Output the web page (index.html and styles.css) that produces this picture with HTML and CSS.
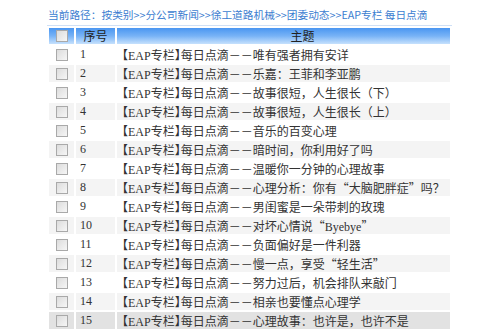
FILE: index.html
```html
<!DOCTYPE html>
<html lang="zh-CN">
<head>
    <meta charset="UTF-8">
    <title>EAP专栏 每日点滴</title>
    <link rel="stylesheet" href="styles.css">
</head>
<body>
    <div class="path">当前路径：<a>按类别</a>&gt;&gt;<a>分公司新闻</a>&gt;&gt;<a>徐工道路机械</a>&gt;&gt;<a>团委动态</a>&gt;&gt;<a>EAP专栏 每日点滴</a></div>

    <table class="list">
        <tr class="head">
            <th class="chk"><span class="box"></span></th>
            <th class="num">序号</th>
            <th class="title">主题</th>
        </tr>
        <tr><td class="chk"><span class="box"></span></td><td class="num">1</td><td class="title"><span class="tag">【<span class="en">EAP</span>专栏】</span>每日点滴－－唯有强者拥有安详</td></tr>
        <tr class="alt"><td class="chk"><span class="box"></span></td><td class="num">2</td><td class="title"><span class="tag">【<span class="en">EAP</span>专栏】</span>每日点滴－－乐嘉：王菲和李亚鹏</td></tr>
        <tr><td class="chk"><span class="box"></span></td><td class="num">3</td><td class="title"><span class="tag">【<span class="en">EAP</span>专栏】</span>每日点滴－－故事很短，人生很长（下）</td></tr>
        <tr class="alt"><td class="chk"><span class="box"></span></td><td class="num">4</td><td class="title"><span class="tag">【<span class="en">EAP</span>专栏】</span>每日点滴－－故事很短，人生很长（上）</td></tr>
        <tr><td class="chk"><span class="box"></span></td><td class="num">5</td><td class="title"><span class="tag">【<span class="en">EAP</span>专栏】</span>每日点滴－－音乐的百变心理</td></tr>
        <tr class="alt"><td class="chk"><span class="box"></span></td><td class="num">6</td><td class="title"><span class="tag">【<span class="en">EAP</span>专栏】</span>每日点滴－－暗时间，你利用好了吗</td></tr>
        <tr><td class="chk"><span class="box"></span></td><td class="num">7</td><td class="title"><span class="tag">【<span class="en">EAP</span>专栏】</span>每日点滴－－温暖你一分钟的心理故事</td></tr>
        <tr class="alt"><td class="chk"><span class="box"></span></td><td class="num">8</td><td class="title"><span class="tag">【<span class="en">EAP</span>专栏】</span>每日点滴－－心理分析：你有“大脑肥胖症”吗？</td></tr>
        <tr><td class="chk"><span class="box"></span></td><td class="num">9</td><td class="title"><span class="tag">【<span class="en">EAP</span>专栏】</span>每日点滴－－男闺蜜是一朵带刺的玫瑰</td></tr>
        <tr class="alt"><td class="chk"><span class="box"></span></td><td class="num">10</td><td class="title"><span class="tag">【<span class="en">EAP</span>专栏】</span>每日点滴－－对坏心情说“<span class="en">Byebye</span>”</td></tr>
        <tr><td class="chk"><span class="box"></span></td><td class="num">11</td><td class="title"><span class="tag">【<span class="en">EAP</span>专栏】</span>每日点滴－－负面偏好是一件利器</td></tr>
        <tr class="alt"><td class="chk"><span class="box"></span></td><td class="num">12</td><td class="title"><span class="tag">【<span class="en">EAP</span>专栏】</span>每日点滴－－慢一点，享受“轻生活”</td></tr>
        <tr><td class="chk"><span class="box"></span></td><td class="num">13</td><td class="title"><span class="tag">【<span class="en">EAP</span>专栏】</span>每日点滴－－努力过后，机会排队来敲门</td></tr>
        <tr class="alt"><td class="chk"><span class="box"></span></td><td class="num">14</td><td class="title"><span class="tag">【<span class="en">EAP</span>专栏】</span>每日点滴－－相亲也要懂点心理学</td></tr>
        <tr class="over"><td class="chk"><span class="box"></span></td><td class="num">15</td><td class="title"><span class="tag">【<span class="en">EAP</span>专栏】</span>每日点滴－－心理故事：也许是，也许不是</td></tr>
    </table>
</body>
</html>
```

FILE: styles.css
```css
body {
    margin: 0;
    background: #fff;
    font-family: "Noto Sans CJK SC", sans-serif;
    color: #333;
}

.path {
    height: 17px;
    padding: 8px 0 0 48px;
    font-size: 10.7px;
    line-height: 14px;
    color: #3b7dd0;
}
.path a {
    color: #3b7dd0;
}

.list {
    margin-left: 47px;
    width: 405px;
    border-collapse: separate;
    border-spacing: 2px;
    border-top: 1px solid #cfe0f6;
    font-size: 12px;
}

.list td, .list th {
    padding: 0;
    height: 17px;
    line-height: 17px;
    white-space: nowrap;
    overflow: hidden;
}

.list th {
    height: 16px;
    line-height: 16px;
    font-weight: normal;
    color: #222;
    background: linear-gradient(to bottom, #4a96f1 0%, #78b3f6 50%, #c6e1fd 100%);
}

.chk {
    width: 25px;
    text-align: center;
}
.num {
    width: 35px;
    padding-left: 4px !important;
    text-align: left;
    font-family: "Liberation Serif", serif;
}
.list th.num {
    padding-left: 0 !important;
    text-align: center;
    font-family: "Noto Sans CJK SC", sans-serif;
}
.title {
    padding-left: 5px !important;
    text-align: left;
    font-feature-settings: "fwid";
}
.list th.title {
    text-align: center;
    padding-left: 38px !important;
}

.tag {
    font-feature-settings: "halt";
    line-height: 10px;
}
.en {
    font-family: "Liberation Serif", serif;
    line-height: 10px;
}

.box {
    display: inline-block;
    width: 10px;
    height: 10px;
    vertical-align: -1px;
    border: 1px solid #a9a9a9;
    background: linear-gradient(135deg, #dcdcdc, #f6f6f6);
}

.alt td {
    background: #f4f4f4;
}
.over td {
    background: #e2e2e2;
}
```
